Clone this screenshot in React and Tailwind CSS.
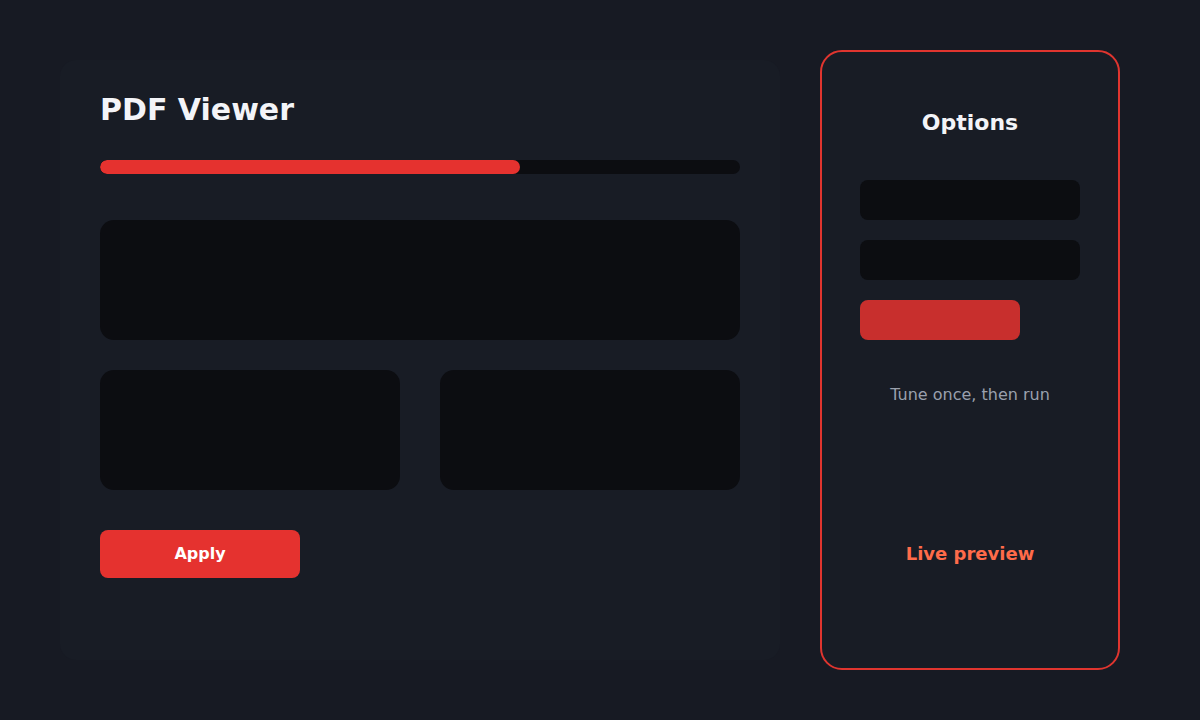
export default function App() {
    return (
        <div className="w-[1200px] h-[720px] bg-[#171a23] flex items-center gap-10 pl-[60px] pr-[80px] font-['DejaVu_Sans',sans-serif]">
            {/* Main panel */}
            <div className="w-[720px] h-[600px] shrink-0 bg-[#181c25] rounded-2xl px-10 pt-8 flex flex-col">
                <h1 className="text-[30px] leading-[36px] font-bold text-[#f3f4f8]">PDF Viewer</h1>

                <div className="mt-8 h-[14px] rounded-full bg-[#0c0d11] overflow-hidden">
                    <div className="h-full rounded-full bg-[#e5322f]" style={{ width: "65.6%" }}></div>
                </div>

                <div className="mt-[46px] h-[120px] rounded-[14px] bg-[#0c0d11]"></div>

                <div className="mt-[30px] grid grid-cols-2 gap-10">
                    <div className="h-[120px] rounded-[14px] bg-[#0c0d11]"></div>
                    <div className="h-[120px] rounded-[14px] bg-[#0c0d11]"></div>
                </div>

                <button className="mt-10 w-[200px] h-12 rounded-lg bg-[#e5322f] text-white text-base font-bold">
                    Apply
                </button>
            </div>

            {/* Options card */}
            <div className="w-[300px] h-[620px] shrink-0 rounded-[22px] border-2 border-[#e0352f] bg-[#181c25] px-[38px] pt-[57px] flex flex-col items-center">
                <h2 className="text-[22px] leading-[28px] font-bold text-[#f3f4f8]">Options</h2>

                <div className="mt-[43px] w-full flex flex-col gap-5">
                    <div className="h-10 rounded-lg bg-[#0c0d11]"></div>
                    <div className="h-10 rounded-lg bg-[#0c0d11]"></div>
                    <div className="h-10 w-[160px] rounded-lg bg-[#c82f2d]"></div>
                </div>

                <p className="mt-[43px] text-base leading-6 text-[#9aa0ad]">Tune once, then run</p>

                <p className="mt-[133px] text-lg leading-7 font-bold text-[#ff6b4a]">Live preview</p>
            </div>
        </div>
    );
}
